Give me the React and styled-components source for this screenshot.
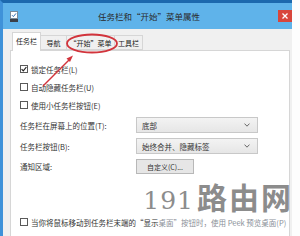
import React from 'react';
import styled, { createGlobalStyle } from 'styled-components';

const GlobalStyle = createGlobalStyle`
  html, body {
    margin: 0;
    padding: 0;
    background: #fdfdfd;
  }
  body {
    width: 300px;
    height: 236px;
    overflow: hidden;
    font-family: "Noto Sans CJK SC", "Noto Sans", sans-serif;
    color: #333;
  }
`;

const Page = styled.div`
  position: relative;
  width: 300px;
  height: 236px;
  overflow: hidden;
  display: flex;
`;

const Window = styled.div`
  width: 289px;
  height: 233px;
  border-left: 3px solid #3f92d9;
  border-top: 3px solid #1c69ae;
  display: flex;
  flex-direction: column;
  background: #f0f0f0;
`;

const TitleBar = styled.div`
  height: 26px;
  flex-shrink: 0;
  background: #5fb3ea;
  display: flex;
  align-items: center;
  padding-left: 7px;
`;

const Title = styled.div`
  flex: 1;
  text-align: center;
  font-size: 8.5px;
  color: #2a2a2a;
  padding-left: 2px;
  margin-top: -1px;
`;

const CloseButton = styled.div`
  align-self: flex-start;
  margin-top: 7px;
  width: 14px;
  height: 12px;
  background: #d8463c;
  display: flex;
  align-items: center;
  justify-content: center;
`;

const Body = styled.div`
  flex: 1;
  display: flex;
  flex-direction: column;
  padding: 3px 2px 0 7px;
`;

const TabRow = styled.div`
  height: 18px;
  display: flex;
  align-items: flex-end;
  padding-left: 2px;
`;

const Tab = styled.div`
  position: relative;
  box-sizing: border-box;
  width: ${({ $w }) => $w}px;
  height: ${({ $active }) => ($active ? 19 : 15)}px;
  margin-bottom: ${({ $active }) => ($active ? -1 : 0)}px;
  z-index: ${({ $active }) => ($active ? 1 : 0)};
  background: ${({ $active }) => ($active ? '#fff' : '#f0f0f0')};
  border: 1px solid #d6d6d6;
  border-bottom: ${({ $active }) => ($active ? 'none' : '1px solid #d6d6d6')};
  border-left: ${({ $first }) => ($first ? '1px solid #d6d6d6' : 'none')};
  font-size: 7px;
  color: #222;
  display: flex;
  align-items: center;
  justify-content: center;
  padding-bottom: ${({ $active }) => ($active ? 2 : 0)}px;
`;

const Panel = styled.div`
  flex: 1;
  background: #fff;
  border: 1px solid #d6d6d6;
  border-bottom: none;
  display: flex;
  flex-direction: column;
  padding: 9px 0 0 9px;
`;

const CheckRow = styled.div`
  height: 18px;
  display: flex;
  align-items: center;
  gap: 3px;
  font-size: 7.5px;
  color: #333;
  margin-top: ${({ $mt }) => $mt || 0}px;
  white-space: nowrap;
`;

const Box = styled.span`
  width: 8px;
  height: 8px;
  box-sizing: border-box;
  border: 1px solid #5a5a5a;
  background: #fff;
  display: flex;
  align-items: center;
  justify-content: center;
  flex-shrink: 0;
`;

const Fields = styled.div`
  margin-top: 3px;
  display: flex;
  flex-direction: column;
  gap: 5px;
`;

const FieldRow = styled.div`
  display: grid;
  grid-template-columns: 116px 122px;
  align-items: center;
  font-size: 7.5px;
  color: #333;
  white-space: nowrap;
`;

const Select = styled.div`
  height: 16px;
  box-sizing: border-box;
  border: 1px solid #c8c8c8;
  background: linear-gradient(#f3f3f3, #e6e6e6);
  display: flex;
  align-items: center;
  justify-content: space-between;
  padding: 0 7px 0 5px;
  font-size: 7.5px;
  color: #333;
`;

const Button = styled.div`
  width: 58px;
  height: 15px;
  box-sizing: border-box;
  border: 1px solid #b8b8b8;
  background: #e6e6e6;
  display: flex;
  align-items: center;
  justify-content: center;
  font-size: 7px;
  color: #333;
`;

const Muted = styled.span`
  color: #8a8f98;
`;

const Watermark = styled.div`
  position: absolute;
  right: 7px;
  top: 174px;
  display: flex;
  align-items: baseline;
  gap: 3px;
  color: #8c8c8c;
  pointer-events: none;
`;

const Digits = styled.span`
  font-family: "DejaVu Serif", serif;
  font-size: 25px;
  letter-spacing: 1px;
`;

const Brand = styled.span`
  font-family: "Noto Sans CJK SC", sans-serif;
  font-weight: 700;
  font-size: 30px;
  letter-spacing: 2px;
`;

const Annotation = styled.svg`
  position: absolute;
  left: 0;
  top: 0;
  pointer-events: none;
`;

const Check = () => (
  <svg width="6" height="6" viewBox="0 0 6 6">
    <path d="M0.6 3.2 L2.3 4.9 L5.4 1" fill="none" stroke="#222" strokeWidth="1.2" />
  </svg>
);

const Chevron = () => (
  <svg width="6" height="4" viewBox="0 0 6 4">
    <path d="M0.5 0.6 L3 3.2 L5.5 0.6" fill="none" stroke="#666" strokeWidth="1" />
  </svg>
);

const AppIcon = () => (
  <svg width="8" height="11" viewBox="0 0 8 11">
    <rect x="0.5" y="0.5" width="7" height="7" fill="#fff" stroke="#7a8a99" />
    <path d="M2 4.2 L3.4 5.6 L6 2.4" fill="none" stroke="#2f6fb3" strokeWidth="1" />
    <rect x="0" y="8" width="8" height="3" fill="#3b4048" />
  </svg>
);

const CheckItem = ({ checked, children, mt }) => (
  <CheckRow $mt={mt}>
    <Box>{checked && <Check />}</Box>
    <span>{children}</span>
  </CheckRow>
);

export default function App() {
  return (
    <>
      <GlobalStyle />
      <Page>
        <Window>
          <TitleBar>
            <AppIcon />
            <Title>任务栏和“开始”菜单属性</Title>
            <CloseButton>
              <svg width="6" height="6" viewBox="0 0 6 6">
                <path d="M0.5 0.5 L5.5 5.5 M5.5 0.5 L0.5 5.5" stroke="#fff" strokeWidth="1.3" />
              </svg>
            </CloseButton>
          </TitleBar>
          <Body>
            <TabRow>
              <Tab $active $first $w={29}>任务栏</Tab>
              <Tab $w={26}>导航</Tab>
              <Tab $w={48}>“开始”菜单</Tab>
              <Tab $w={28}>工具栏</Tab>
            </TabRow>
            <Panel>
              <CheckItem checked>锁定任务栏(L)</CheckItem>
              <CheckItem>自动隐藏任务栏(U)</CheckItem>
              <CheckItem>使用小任务栏按钮(E)</CheckItem>
              <Fields>
                <FieldRow>
                  <span>任务栏在屏幕上的位置(T):</span>
                  <Select>
                    <span>底部</span>
                    <Chevron />
                  </Select>
                </FieldRow>
                <FieldRow>
                  <span>任务栏按钮(B):</span>
                  <Select>
                    <span>始终合并、隐藏标签</span>
                    <Chevron />
                  </Select>
                </FieldRow>
                <FieldRow>
                  <span>通知区域:</span>
                  <Button>自定义(C)...</Button>
                </FieldRow>
              </Fields>
              <CheckItem mt={39}>
                当你将鼠标移动到任务栏末端的“显示<Muted>桌面”按钮时，使用 Peek 预览桌面(P)</Muted>
              </CheckItem>
            </Panel>
          </Body>
        </Window>
        <Watermark>
          <Digits>191</Digits>
          <Brand>路由网</Brand>
        </Watermark>
        <Annotation width="300" height="236" viewBox="0 0 300 236">
          <ellipse cx="92" cy="43.5" rx="25" ry="9" fill="none" stroke="#d2343c" strokeWidth="1.8" />
          <path d="M43 86 L70 59" stroke="#d2343c" strokeWidth="1.5" />
          <path d="M73 55.5 L66.5 58.5 L70 62 Z" fill="#d2343c" />
        </Annotation>
      </Page>
    </>
  );
}
